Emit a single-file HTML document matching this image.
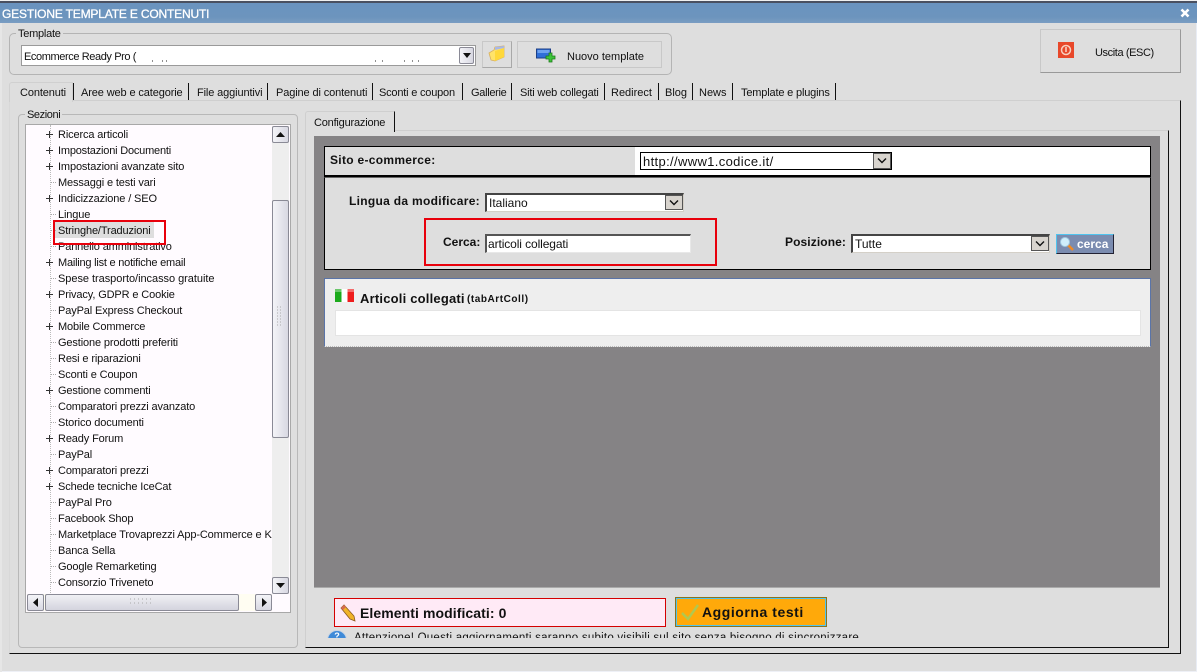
<!DOCTYPE html>
<html><head><meta charset="utf-8"><style>
html,body{margin:0;padding:0}
body{width:1197px;height:672px;overflow:hidden;position:relative;background:#dedede;font:11px/16px "Liberation Sans",sans-serif;color:#111}
div,span,svg{position:absolute;box-sizing:border-box}
.t{white-space:nowrap}
.b{font-weight:bold}
.tab{top:84px;white-space:nowrap;line-height:18px;letter-spacing:-.12px}
.sep{top:83px;width:1px;height:17px;background:#111}
.r{left:58px;white-space:nowrap;letter-spacing:-.13px;margin-top:1px}
.p{left:46px;width:7px;height:7px;border:0}
.p:before{content:"";position:absolute;left:0;top:3px;width:7px;height:1px;background:#333}
.p:after{content:"";position:absolute;left:3px;top:0;width:1px;height:7px;background:#333}
.d{left:51px;width:5px;height:1px;border-top:1px dotted #aaa}
.arrowbtn{background:linear-gradient(90deg,#f4f4f8,#d8d8e2);border:1px solid #8a8a96;border-radius:2px}
.ddb{background:#d8d4ce;border:1px solid #555}
</style></head><body>
<!-- top strip -->
<div style="left:0;top:0;width:1197px;height:3px;background:#f0f0f0"></div>
<div style="left:0;top:1px;width:1197px;height:2px;background:#4a5060"></div>
<div style="left:0;top:3px;width:1197px;height:20px;background:linear-gradient(#6a93bf,#6c94bd 70%,#7a9dc2)"></div>
<div class="t" style="left:2px;top:6px;color:#fff;font-size:12px;line-height:16px;letter-spacing:-.17px;-webkit-text-stroke:.3px #fff">GESTIONE TEMPLATE E CONTENUTI</div>
<svg style="left:1179px;top:7px" width="12" height="12" viewBox="0 0 12 12"><path d="M2.500 2.500L9.500 9.500M9.500 2.500L2.500 9.500" stroke="#fff" stroke-width="2.600"/></svg>
<div style="left:1196px;top:23px;width:1px;height:649px;background:#e8ecf4"></div>
<div style="left:0;top:671px;width:1197px;height:1px;background:#eef0f6"></div>
<div style="left:0;top:23px;width:2px;height:649px;background:#e6e6e6"></div>

<!-- template group -->
<div style="left:9px;top:33px;width:663px;height:42px;border:1px solid #b4b4b4;border-radius:5px"></div>
<div class="t" style="left:16px;top:27px;background:#dedede;padding:0 2px;height:14px;line-height:14px;letter-spacing:-.25px">Template</div>
<div style="left:21px;top:45px;width:455px;height:21px;background:#fff;border:1px solid #9a9a9a"></div>
<div class="t" style="left:24px;top:48px;letter-spacing:-.4px;margin-top:1px">Ecommerce Ready Pro (</div>
<svg style="left:130px;top:55px" width="340" height="8"><path d="M22 6h1M32 6h1M36 6h1M245 6h1M252 6h1M274 6h1M282 6h1M288 6h1M362 6h1M368 6h1" stroke="#222"/></svg>
<div class="arrowbtn" style="left:459px;top:47px;width:15px;height:17px"></div>
<svg style="left:463px;top:53px" width="8" height="5"><path d="M0 0H8L4 5Z" fill="#111"/></svg>
<div style="left:482px;top:41px;width:30px;height:27px;border:1px solid #c8c8c8;border-right:1px solid #a8a8a8;border-bottom:1px solid #a8a8a8"></div>
<svg style="left:488px;top:45px" width="18" height="18" viewBox="0 0 18 18"><path d="M1 8L6 5L7 2L16 1V12L7 16L3 15Z" fill="#ffe36a" stroke="#d8b060" stroke-width=".8"/><path d="M7 6L16 3V12L7 16Z" fill="#ffd83a"/><path d="M7 2L16 1V3L7 5Z" fill="#a8b8e8"/></svg>
<div style="left:517px;top:41px;width:145px;height:27px;border:1px solid #c8c8c8"></div>
<svg style="left:536px;top:48px" width="20" height="16" viewBox="0 0 20 16"><rect x="0.500" y="1" width="14" height="9" fill="#2f6fd8" stroke="#1c3f86"/><rect x="1.500" y="2" width="12" height="3" fill="#6ea2ee"/><path d="M10 8h3V5h3v3h3v3h-3v3h-3v-3h-3z" fill="#3dc43a" stroke="#1d7a1a" stroke-width=".8"/></svg>
<div class="t" style="left:567px;top:49px">Nuovo template</div>
<div style="left:1040px;top:29px;width:141px;height:44px;background:#dedede;border:1px solid #c8c8c8;border-right:1px solid #999;border-bottom:1px solid #999"></div>
<svg style="left:1057px;top:41px" width="18" height="18" viewBox="0 0 18 18"><rect x="0.500" y="0.500" width="17" height="17" fill="#e8482a" stroke="#ddd"/><circle cx="9" cy="9" r="4.500" fill="none" stroke="#f8d0c0" stroke-width="1.500"/><rect x="8.200" y="6" width="1.600" height="5" fill="#f8d0c0"/></svg>
<div class="t" style="left:1095px;top:45px;letter-spacing:-.4px">Uscita (ESC)</div>

<!-- tabs -->
<div style="left:9px;top:100px;width:1172px;height:554px;border:1px solid #cfcfcf;border-right:1px solid #111;border-bottom:1px solid #111;border-left:1px solid #d8d8d8"></div>
<div style="left:9px;top:82px;width:64px;height:20px;background:#dedede;border:1px solid #d0d0d0;border-bottom:0;border-radius:3px 0 0 0"></div>
<div class="tab" style="left:20px">Contenuti</div><div class="sep" style="left:73px"></div>
<div class="tab" style="left:81px">Aree web e categorie</div><div class="sep" style="left:188px"></div>
<div class="tab" style="left:197px">File aggiuntivi</div><div class="sep" style="left:267px"></div>
<div class="tab" style="left:276px">Pagine di contenuti</div><div class="sep" style="left:372px"></div>
<div class="tab" style="left:379px;letter-spacing:-.2px">Sconti e coupon</div><div class="sep" style="left:462px"></div>
<div class="tab" style="left:471px;letter-spacing:-.3px">Gallerie</div><div class="sep" style="left:511px"></div>
<div class="tab" style="left:520px;letter-spacing:-.18px">Siti web collegati</div><div class="sep" style="left:604px"></div>
<div class="tab" style="left:611px;letter-spacing:0">Redirect</div><div class="sep" style="left:658px"></div>
<div class="tab" style="left:665px;letter-spacing:0">Blog</div><div class="sep" style="left:692px"></div>
<div class="tab" style="left:699px;letter-spacing:0">News</div><div class="sep" style="left:732px"></div>
<div class="tab" style="left:741px;letter-spacing:-.17px">Template e plugins</div><div class="sep" style="left:835px"></div>

<!-- sezioni -->
<div style="left:18px;top:114px;width:280px;height:534px;border:1px solid #b8b8b8;border-radius:4px"></div>
<div class="t" style="left:25px;top:108px;background:#dedede;padding:0 2px;height:14px;line-height:14px;letter-spacing:-.4px">Sezioni</div>
<div style="left:25px;top:124px;width:266px;height:489px;background:#fffbff;border:1px solid #a8a8a8;overflow:hidden">
 <div style="left:24px;top:0;width:1px;height:470px;border-left:1px dotted #bbb"></div>
</div>
<div style="left:55px;top:222px;width:99px;height:16px;background:#dedede"></div>

<div class="p" style="top:131px"></div><div class="r" style="top:126px">Ricerca articoli</div>
<div class="p" style="top:147px"></div><div class="r" style="top:142px;letter-spacing:-.2px">Impostazioni Documenti</div>
<div class="p" style="top:163px"></div><div class="r" style="top:158px">Impostazioni avanzate sito</div>
<div class="d" style="top:182px"></div><div class="r" style="top:174px">Messaggi e testi vari</div>
<div class="p" style="top:195px"></div><div class="r" style="top:190px">Indicizzazione / SEO</div>
<div class="d" style="top:214px"></div><div class="r" style="top:206px">Lingue</div>
<div class="d" style="top:230px"></div><div class="r" style="top:222px">Stringhe/Traduzioni</div>
<div class="d" style="top:246px"></div><div class="r" style="top:238px">Pannello amministrativo</div>
<div class="p" style="top:259px"></div><div class="r" style="top:254px;letter-spacing:-.22px">Mailing list e notifiche email</div>
<div class="d" style="top:278px"></div><div class="r" style="top:270px;letter-spacing:-.04px">Spese trasporto/incasso gratuite</div>
<div class="p" style="top:291px"></div><div class="r" style="top:286px">Privacy, GDPR e Cookie</div>
<div class="d" style="top:310px"></div><div class="r" style="top:302px">PayPal Express Checkout</div>
<div class="p" style="top:323px"></div><div class="r" style="top:318px">Mobile Commerce</div>
<div class="d" style="top:342px"></div><div class="r" style="top:334px">Gestione prodotti preferiti</div>
<div class="d" style="top:358px"></div><div class="r" style="top:350px">Resi e riparazioni</div>
<div class="d" style="top:374px"></div><div class="r" style="top:366px">Sconti e Coupon</div>
<div class="p" style="top:387px"></div><div class="r" style="top:382px">Gestione commenti</div>
<div class="d" style="top:406px"></div><div class="r" style="top:398px">Comparatori prezzi avanzato</div>
<div class="d" style="top:422px"></div><div class="r" style="top:414px">Storico documenti</div>
<div class="p" style="top:435px"></div><div class="r" style="top:430px">Ready Forum</div>
<div class="d" style="top:454px"></div><div class="r" style="top:446px">PayPal</div>
<div class="p" style="top:467px"></div><div class="r" style="top:462px">Comparatori prezzi</div>
<div class="p" style="top:483px"></div><div class="r" style="top:478px">Schede tecniche IceCat</div>
<div class="d" style="top:502px"></div><div class="r" style="top:494px">PayPal Pro</div>
<div class="d" style="top:518px"></div><div class="r" style="top:510px">Facebook Shop</div>
<div class="t" style="left:58px;top:527px;width:214px;overflow:hidden;letter-spacing:-.13px">Marketplace Trovaprezzi App-Commerce e Kit</div>
<div class="d" style="top:534px"></div>
<div class="d" style="top:550px"></div><div class="r" style="top:542px">Banca Sella</div>
<div class="d" style="top:566px"></div><div class="r" style="top:558px">Google Remarketing</div>
<div class="d" style="top:582px"></div><div class="r" style="top:574px">Consorzio Triveneto</div>

<!-- red highlight -->
<div style="left:53px;top:220px;width:113px;height:25px;border:2px solid #e8000b"></div>

<!-- v scrollbar -->
<div style="left:272px;top:126px;width:17px;height:468px;background:#eeeeee"></div>
<div class="arrowbtn" style="left:272px;top:126px;width:17px;height:17px"></div>
<svg style="left:276px;top:132px" width="9" height="5"><path d="M0 5H9L4.500 0Z" fill="#111"/></svg>
<div class="arrowbtn" style="left:272px;top:200px;width:17px;height:238px"></div>
<svg style="left:276px;top:306px" width="8" height="24"><path d="M1 1h1M4 1h1M1 4h1M4 4h1M1 7h1M4 7h1M1 10h1M4 10h1M1 13h1M4 13h1M1 16h1M4 16h1M1 19h1M4 19h1" stroke="#aaa"/></svg>
<div class="arrowbtn" style="left:272px;top:577px;width:17px;height:17px"></div>
<svg style="left:276px;top:583px" width="9" height="5"><path d="M0 0H9L4.500 5Z" fill="#111"/></svg>
<!-- h scrollbar -->
<div style="left:27px;top:594px;width:245px;height:17px;background:#fffdf2"></div>
<div class="arrowbtn" style="left:27px;top:594px;width:17px;height:17px;background:linear-gradient(#f4f4f8,#d8d8e2)"></div>
<svg style="left:33px;top:598px" width="5" height="9"><path d="M5 0V9L0 4.500Z" fill="#111"/></svg>
<div class="arrowbtn" style="left:45px;top:594px;width:194px;height:17px;background:linear-gradient(#f0f0f4,#d4d4de)"></div>
<svg style="left:130px;top:598px" width="24" height="8"><path d="M0 1h1M4 1h1M8 1h1M12 1h1M16 1h1M20 1h1M0 5h1M4 5h1M8 5h1M12 5h1M16 5h1M20 5h1" stroke="#aaa"/></svg>
<div class="arrowbtn" style="left:255px;top:594px;width:17px;height:17px;background:linear-gradient(#f4f4f8,#d8d8e2)"></div>
<svg style="left:262px;top:598px" width="5" height="9"><path d="M0 0V9L5 4.500Z" fill="#111"/></svg>

<!-- config panel -->
<div style="left:305px;top:130px;width:864px;height:518px;border:1px solid #cfcfcf;border-right:1px solid #111;border-bottom:1px solid #111"></div>
<div style="left:305px;top:111px;width:90px;height:21px;background:#dedede;border:1px solid #cfcfcf;border-bottom:0;border-right:1px solid #111;border-radius:3px 0 0 0"></div>
<div class="t" style="left:314px;top:115px;letter-spacing:-.2px">Configurazione</div>

<div style="left:314px;top:136px;width:846px;height:452px;background:#858385;border-bottom:1px solid #aaa"></div>
<div style="left:324px;top:146px;width:827px;height:31px;background:#dedede;border:1px solid #000;border-bottom:2px solid #000"></div>
<div style="left:635px;top:147px;width:515px;height:28px;background:#fff"></div>
<div class="t b" style="left:330px;top:152px;font-size:12px;line-height:16px;letter-spacing:.3px">Sito e-commerce:</div>
<div style="left:640px;top:152px;width:252px;height:18px;background:#fff;border:1px solid #000"></div>
<div class="t" style="left:643px;top:154px;font:13px/16px 'Liberation Sans',sans-serif;letter-spacing:.35px">http://www1.codice.it/</div>
<div class="ddb" style="left:873px;top:153px;width:18px;height:16px"></div>
<svg style="left:877px;top:158px" width="10" height="6"><path d="M1 0.500L5 4.500L9 0.500" fill="none" stroke="#111" stroke-width="1.400"/></svg>

<div style="left:324px;top:177px;width:827px;height:93px;background:#dedede;border:1px solid #000;border-top:1px solid #666"></div>
<div class="t b" style="left:349px;top:193px;font-size:12px;letter-spacing:.3px">Lingua da modificare:</div>
<div style="left:485px;top:193px;width:199px;height:19px;background:#fff;border:1px solid #d4d0c8;border-top:2px solid #444;border-left:2px solid #444"></div>
<div class="t" style="left:489px;top:195px;font-size:12px">Italiano</div>
<div class="ddb" style="left:665px;top:195px;width:18px;height:15px"></div>
<svg style="left:669px;top:200px" width="10" height="6"><path d="M1 0.500L5 4.500L9 0.500" fill="none" stroke="#111" stroke-width="1.400"/></svg>

<div style="left:424px;top:218px;width:293px;height:48px;border:2px solid #e8000b"></div>
<div class="t b" style="left:443px;top:234px;font-size:12px">Cerca:</div>
<div style="left:485px;top:234px;width:206px;height:19px;background:#fff;border:1px solid #e8e8e8;border-top:2px solid #555;border-left:2px solid #555"></div>
<div class="t" style="left:488px;top:236px;font-size:12px;letter-spacing:-.1px">articoli collegati</div>

<div class="t b" style="left:785px;top:234px;font-size:12px;letter-spacing:.1px">Posizione:</div>
<div style="left:851px;top:234px;width:199px;height:19px;background:#fff;border:1px solid #d4d0c8;border-top:2px solid #444;border-left:2px solid #444"></div>
<div class="t" style="left:855px;top:236px;font-size:12px">Tutte</div>
<div class="ddb" style="left:1031px;top:236px;width:18px;height:15px"></div>
<svg style="left:1035px;top:241px" width="10" height="6"><path d="M1 0.500L5 4.500L9 0.500" fill="none" stroke="#111" stroke-width="1.400"/></svg>
<div style="left:1056px;top:234px;width:58px;height:20px;background:#7b8cb0;border:1px solid #4fc3ee;border-right:1px solid #223;border-bottom:1px solid #223"></div>
<svg style="left:1059px;top:236px" width="16" height="16" viewBox="0 0 16 16"><path d="M9 9L14 14" stroke="#f08a24" stroke-width="2.500"/><circle cx="6" cy="6" r="4.500" fill="#cfeefb" stroke="#9fc8e0"/></svg>
<div class="t b" style="left:1077px;top:236px;color:#fff;font-size:12px;line-height:17px">cerca</div>

<div style="left:324px;top:278px;width:827px;height:69px;background:#eeeeee;border:1px solid #5a74a8;border-bottom:1px dotted #bbb"></div>
<svg style="left:335px;top:289px" width="19" height="13"><rect width="6.500" height="13" fill="#1caa1c"/><rect x="6.500" width="6" height="13" fill="#fff"/><rect x="12.500" width="6.500" height="13" fill="#ee1c1c"/><rect y="0" width="19" height="3" fill="#fff" opacity=".35"/></svg>
<div class="t b" style="left:360px;top:291px;font-size:13px;letter-spacing:.2px">Articoli collegati</div>
<div class="t b" style="left:467px;top:292px;font-size:10px;letter-spacing:.55px">(tabArtColl)</div>
<div style="left:335px;top:310px;width:806px;height:26px;background:#fff;border:1px solid #e4e4e4"></div>

<!-- bottom -->
<div style="left:334px;top:598px;width:332px;height:29px;background:#ffeaf6;border:1px solid #d40000"></div>
<svg style="left:338px;top:604px" width="18" height="18" viewBox="0 0 18 18"><path d="M3 4L6 1L16 12L17 17L12 15Z" fill="#f0b428" stroke="#8a5a20" stroke-width=".8"/><path d="M3 4L6 1L8 3L5 6Z" fill="#d86a50"/></svg>
<div class="t b" style="left:360px;top:604px;font-size:14px;line-height:18px;letter-spacing:.08px">Elementi modificati: 0</div>
<div style="left:676px;top:598px;width:150px;height:28px;background:#ffa90a;border:1px solid #4fc3ee;outline:1px solid #8a7420"></div>
<svg style="left:681px;top:604px" width="18" height="17" viewBox="0 0 18 17"><path d="M1 9L7 15L17 1" fill="none" stroke="#b0c850" stroke-width="2.500"/></svg>
<div class="t b" style="left:702px;top:603px;font-size:14px;line-height:18px;letter-spacing:.55px">Aggiorna testi</div>

<div style="left:310px;top:630px;width:850px;height:8px;overflow:hidden">
 <svg style="left:17px;top:0" width="20" height="8"><circle cx="10" cy="10" r="9.500" fill="#3f8ad8" stroke="#c8d4e4"/><text x="10" y="9" font-size="9" font-weight="bold" text-anchor="middle" fill="#fff" font-family="Liberation Sans">?</text></svg>
 <div class="t" style="left:44px;top:0;font-size:11.500px;line-height:16px;letter-spacing:.24px">Attenzione! Questi aggiornamenti saranno subito visibili sul sito senza bisogno di sincronizzare</div>
</div>
</body></html>
